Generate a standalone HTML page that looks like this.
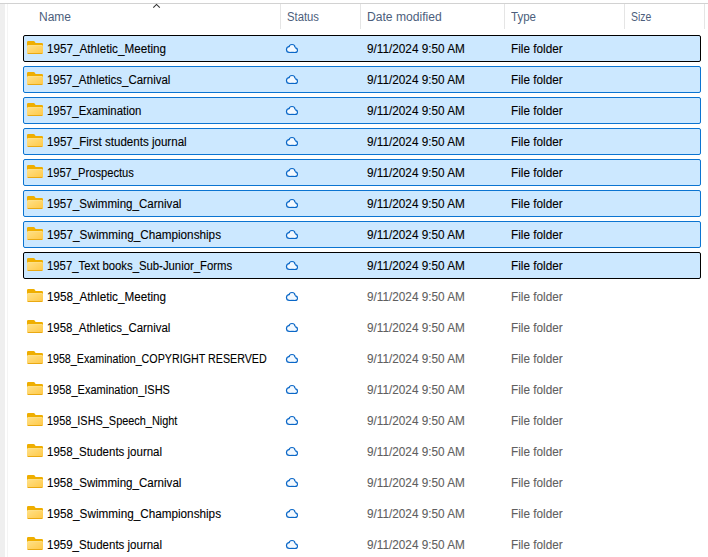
<!DOCTYPE html><html><head><meta charset="utf-8"><style>
*{margin:0;padding:0;box-sizing:border-box}
html,body{width:708px;height:557px;overflow:hidden;background:#fff}
body{position:relative;font-family:"Liberation Sans",sans-serif;font-size:12px;color:#000}
.abs{position:absolute}
.t{position:absolute;white-space:pre;line-height:14px;transform-origin:0 0;-webkit-text-stroke:0.1px currentColor}
.h{color:#4c5e7c;-webkit-text-stroke:0}
.sep{position:absolute;top:4px;width:1px;height:25px;background:#e5e5e5}
.row{position:absolute;left:23px;width:678px;height:27px;border-radius:2px}
.sel{background:#cce8ff;border:1px solid #0b74d1}
.foc{background:#cce8ff;border:1px solid #000}
.fd{position:absolute;left:27px}
.cl{position:absolute;left:285px}
.g{color:#5f5f5f}
</style></head><body>
<div class="abs" style="left:0;top:4px;width:5px;height:553px;background:#efefef"></div>
<div class="abs" style="left:7px;top:4px;width:1px;height:553px;background:#f4f4f4"></div>
<div class="abs" style="left:0;top:3px;width:708px;height:1px;background:#d2d2d2"></div>
<div class="sep" style="left:280px"></div>
<div class="sep" style="left:360px"></div>
<div class="sep" style="left:504px"></div>
<div class="sep" style="left:624px"></div>
<div class="sep" style="left:704px"></div>
<svg class="abs" style="left:151px;top:2px" width="12" height="8" viewBox="0 0 12 8"><path d="M2.3,5.6 L5.5,2.4 L8.8,5.6" fill="none" stroke="#333" stroke-width="1.1"/></svg>
<div class="t h" style="left:39px;top:10px;transform:scaleX(1.0)">Name</div>
<div class="t h" style="left:287px;top:10px;transform:scaleX(0.94)">Status</div>
<div class="t h" style="left:367px;top:10px;transform:scaleX(1.01)">Date modified</div>
<div class="t h" style="left:511px;top:10px;transform:scaleX(0.96)">Type</div>
<div class="t h" style="left:631px;top:10px;transform:scaleX(0.87)">Size</div>
<div class="row foc" style="top:35px"></div>
<svg class="fd" style="top:41px" width="16" height="13" viewBox="0 0 16 13"><defs><linearGradient id="fg" x1="0" y1="0" x2="1" y2="1"><stop offset="0" stop-color="#ffe188"/><stop offset="1" stop-color="#ffc846"/></linearGradient></defs><path d="M0,1.2 Q0,0 1.2,0 H6.6 Q7.3,0 7.7,0.6 L8.6,2 H14.8 Q16,2 16,3.2 V5 H0 Z" fill="#efae00"/><rect x="0" y="4.15" width="16" height="8.85" rx="1.2" fill="url(#fg)"/><rect x="0.6" y="4.15" width="14.8" height="0.7" fill="#ffeeb0" opacity="0.7"/><rect x="0.6" y="12" width="14.8" height="1" rx="0.5" fill="#eaa912"/></svg>
<svg class="cl" style="top:43px" width="14" height="11" viewBox="0 0 14 11"><circle cx="4.4" cy="6.5" r="3.50" fill="#0a67c7"/><circle cx="7.0" cy="4.5" r="3.60" fill="#0a67c7"/><circle cx="10.15" cy="7.15" r="2.85" fill="#0a67c7"/><rect x="4.4" y="4.5" width="5.75" height="5.50" fill="#0a67c7"/><circle cx="4.4" cy="6.5" r="2.30" fill="#f3f9ff"/><circle cx="7.0" cy="4.5" r="2.40" fill="#f3f9ff"/><circle cx="10.15" cy="7.15" r="1.65" fill="#f3f9ff"/><rect x="4.4" y="4.5" width="5.75" height="4.30" fill="#f3f9ff"/></svg>
<div class="t" style="left:47px;top:42px;transform:scaleX(0.975)">1957_Athletic_Meeting</div>
<div class="t" style="left:367px;top:42px;transform:scaleX(0.98)">9/11/2024 9:50 AM</div>
<div class="t" style="left:511px;top:42px;transform:scaleX(0.98)">File folder</div>
<div class="row sel" style="top:66px"></div>
<svg class="fd" style="top:72px" width="16" height="13" viewBox="0 0 16 13"><defs><linearGradient id="fg" x1="0" y1="0" x2="1" y2="1"><stop offset="0" stop-color="#ffe188"/><stop offset="1" stop-color="#ffc846"/></linearGradient></defs><path d="M0,1.2 Q0,0 1.2,0 H6.6 Q7.3,0 7.7,0.6 L8.6,2 H14.8 Q16,2 16,3.2 V5 H0 Z" fill="#efae00"/><rect x="0" y="4.15" width="16" height="8.85" rx="1.2" fill="url(#fg)"/><rect x="0.6" y="4.15" width="14.8" height="0.7" fill="#ffeeb0" opacity="0.7"/><rect x="0.6" y="12" width="14.8" height="1" rx="0.5" fill="#eaa912"/></svg>
<svg class="cl" style="top:74px" width="14" height="11" viewBox="0 0 14 11"><circle cx="4.4" cy="6.5" r="3.50" fill="#0a67c7"/><circle cx="7.0" cy="4.5" r="3.60" fill="#0a67c7"/><circle cx="10.15" cy="7.15" r="2.85" fill="#0a67c7"/><rect x="4.4" y="4.5" width="5.75" height="5.50" fill="#0a67c7"/><circle cx="4.4" cy="6.5" r="2.30" fill="#f3f9ff"/><circle cx="7.0" cy="4.5" r="2.40" fill="#f3f9ff"/><circle cx="10.15" cy="7.15" r="1.65" fill="#f3f9ff"/><rect x="4.4" y="4.5" width="5.75" height="4.30" fill="#f3f9ff"/></svg>
<div class="t" style="left:47px;top:73px;transform:scaleX(0.953)">1957_Athletics_Carnival</div>
<div class="t" style="left:367px;top:73px;transform:scaleX(0.98)">9/11/2024 9:50 AM</div>
<div class="t" style="left:511px;top:73px;transform:scaleX(0.98)">File folder</div>
<div class="row sel" style="top:97px"></div>
<svg class="fd" style="top:103px" width="16" height="13" viewBox="0 0 16 13"><defs><linearGradient id="fg" x1="0" y1="0" x2="1" y2="1"><stop offset="0" stop-color="#ffe188"/><stop offset="1" stop-color="#ffc846"/></linearGradient></defs><path d="M0,1.2 Q0,0 1.2,0 H6.6 Q7.3,0 7.7,0.6 L8.6,2 H14.8 Q16,2 16,3.2 V5 H0 Z" fill="#efae00"/><rect x="0" y="4.15" width="16" height="8.85" rx="1.2" fill="url(#fg)"/><rect x="0.6" y="4.15" width="14.8" height="0.7" fill="#ffeeb0" opacity="0.7"/><rect x="0.6" y="12" width="14.8" height="1" rx="0.5" fill="#eaa912"/></svg>
<svg class="cl" style="top:105px" width="14" height="11" viewBox="0 0 14 11"><circle cx="4.4" cy="6.5" r="3.50" fill="#0a67c7"/><circle cx="7.0" cy="4.5" r="3.60" fill="#0a67c7"/><circle cx="10.15" cy="7.15" r="2.85" fill="#0a67c7"/><rect x="4.4" y="4.5" width="5.75" height="5.50" fill="#0a67c7"/><circle cx="4.4" cy="6.5" r="2.30" fill="#f3f9ff"/><circle cx="7.0" cy="4.5" r="2.40" fill="#f3f9ff"/><circle cx="10.15" cy="7.15" r="1.65" fill="#f3f9ff"/><rect x="4.4" y="4.5" width="5.75" height="4.30" fill="#f3f9ff"/></svg>
<div class="t" style="left:47px;top:104px;transform:scaleX(0.949)">1957_Examination</div>
<div class="t" style="left:367px;top:104px;transform:scaleX(0.98)">9/11/2024 9:50 AM</div>
<div class="t" style="left:511px;top:104px;transform:scaleX(0.98)">File folder</div>
<div class="row sel" style="top:128px"></div>
<svg class="fd" style="top:134px" width="16" height="13" viewBox="0 0 16 13"><defs><linearGradient id="fg" x1="0" y1="0" x2="1" y2="1"><stop offset="0" stop-color="#ffe188"/><stop offset="1" stop-color="#ffc846"/></linearGradient></defs><path d="M0,1.2 Q0,0 1.2,0 H6.6 Q7.3,0 7.7,0.6 L8.6,2 H14.8 Q16,2 16,3.2 V5 H0 Z" fill="#efae00"/><rect x="0" y="4.15" width="16" height="8.85" rx="1.2" fill="url(#fg)"/><rect x="0.6" y="4.15" width="14.8" height="0.7" fill="#ffeeb0" opacity="0.7"/><rect x="0.6" y="12" width="14.8" height="1" rx="0.5" fill="#eaa912"/></svg>
<svg class="cl" style="top:136px" width="14" height="11" viewBox="0 0 14 11"><circle cx="4.4" cy="6.5" r="3.50" fill="#0a67c7"/><circle cx="7.0" cy="4.5" r="3.60" fill="#0a67c7"/><circle cx="10.15" cy="7.15" r="2.85" fill="#0a67c7"/><rect x="4.4" y="4.5" width="5.75" height="5.50" fill="#0a67c7"/><circle cx="4.4" cy="6.5" r="2.30" fill="#f3f9ff"/><circle cx="7.0" cy="4.5" r="2.40" fill="#f3f9ff"/><circle cx="10.15" cy="7.15" r="1.65" fill="#f3f9ff"/><rect x="4.4" y="4.5" width="5.75" height="4.30" fill="#f3f9ff"/></svg>
<div class="t" style="left:47px;top:135px;transform:scaleX(0.965)">1957_First students journal</div>
<div class="t" style="left:367px;top:135px;transform:scaleX(0.98)">9/11/2024 9:50 AM</div>
<div class="t" style="left:511px;top:135px;transform:scaleX(0.98)">File folder</div>
<div class="row sel" style="top:159px"></div>
<svg class="fd" style="top:165px" width="16" height="13" viewBox="0 0 16 13"><defs><linearGradient id="fg" x1="0" y1="0" x2="1" y2="1"><stop offset="0" stop-color="#ffe188"/><stop offset="1" stop-color="#ffc846"/></linearGradient></defs><path d="M0,1.2 Q0,0 1.2,0 H6.6 Q7.3,0 7.7,0.6 L8.6,2 H14.8 Q16,2 16,3.2 V5 H0 Z" fill="#efae00"/><rect x="0" y="4.15" width="16" height="8.85" rx="1.2" fill="url(#fg)"/><rect x="0.6" y="4.15" width="14.8" height="0.7" fill="#ffeeb0" opacity="0.7"/><rect x="0.6" y="12" width="14.8" height="1" rx="0.5" fill="#eaa912"/></svg>
<svg class="cl" style="top:167px" width="14" height="11" viewBox="0 0 14 11"><circle cx="4.4" cy="6.5" r="3.50" fill="#0a67c7"/><circle cx="7.0" cy="4.5" r="3.60" fill="#0a67c7"/><circle cx="10.15" cy="7.15" r="2.85" fill="#0a67c7"/><rect x="4.4" y="4.5" width="5.75" height="5.50" fill="#0a67c7"/><circle cx="4.4" cy="6.5" r="2.30" fill="#f3f9ff"/><circle cx="7.0" cy="4.5" r="2.40" fill="#f3f9ff"/><circle cx="10.15" cy="7.15" r="1.65" fill="#f3f9ff"/><rect x="4.4" y="4.5" width="5.75" height="4.30" fill="#f3f9ff"/></svg>
<div class="t" style="left:47px;top:166px;transform:scaleX(0.93)">1957_Prospectus</div>
<div class="t" style="left:367px;top:166px;transform:scaleX(0.98)">9/11/2024 9:50 AM</div>
<div class="t" style="left:511px;top:166px;transform:scaleX(0.98)">File folder</div>
<div class="row sel" style="top:190px"></div>
<svg class="fd" style="top:196px" width="16" height="13" viewBox="0 0 16 13"><defs><linearGradient id="fg" x1="0" y1="0" x2="1" y2="1"><stop offset="0" stop-color="#ffe188"/><stop offset="1" stop-color="#ffc846"/></linearGradient></defs><path d="M0,1.2 Q0,0 1.2,0 H6.6 Q7.3,0 7.7,0.6 L8.6,2 H14.8 Q16,2 16,3.2 V5 H0 Z" fill="#efae00"/><rect x="0" y="4.15" width="16" height="8.85" rx="1.2" fill="url(#fg)"/><rect x="0.6" y="4.15" width="14.8" height="0.7" fill="#ffeeb0" opacity="0.7"/><rect x="0.6" y="12" width="14.8" height="1" rx="0.5" fill="#eaa912"/></svg>
<svg class="cl" style="top:198px" width="14" height="11" viewBox="0 0 14 11"><circle cx="4.4" cy="6.5" r="3.50" fill="#0a67c7"/><circle cx="7.0" cy="4.5" r="3.60" fill="#0a67c7"/><circle cx="10.15" cy="7.15" r="2.85" fill="#0a67c7"/><rect x="4.4" y="4.5" width="5.75" height="5.50" fill="#0a67c7"/><circle cx="4.4" cy="6.5" r="2.30" fill="#f3f9ff"/><circle cx="7.0" cy="4.5" r="2.40" fill="#f3f9ff"/><circle cx="10.15" cy="7.15" r="1.65" fill="#f3f9ff"/><rect x="4.4" y="4.5" width="5.75" height="4.30" fill="#f3f9ff"/></svg>
<div class="t" style="left:47px;top:197px;transform:scaleX(0.964)">1957_Swimming_Carnival</div>
<div class="t" style="left:367px;top:197px;transform:scaleX(0.98)">9/11/2024 9:50 AM</div>
<div class="t" style="left:511px;top:197px;transform:scaleX(0.98)">File folder</div>
<div class="row sel" style="top:221px"></div>
<svg class="fd" style="top:227px" width="16" height="13" viewBox="0 0 16 13"><defs><linearGradient id="fg" x1="0" y1="0" x2="1" y2="1"><stop offset="0" stop-color="#ffe188"/><stop offset="1" stop-color="#ffc846"/></linearGradient></defs><path d="M0,1.2 Q0,0 1.2,0 H6.6 Q7.3,0 7.7,0.6 L8.6,2 H14.8 Q16,2 16,3.2 V5 H0 Z" fill="#efae00"/><rect x="0" y="4.15" width="16" height="8.85" rx="1.2" fill="url(#fg)"/><rect x="0.6" y="4.15" width="14.8" height="0.7" fill="#ffeeb0" opacity="0.7"/><rect x="0.6" y="12" width="14.8" height="1" rx="0.5" fill="#eaa912"/></svg>
<svg class="cl" style="top:229px" width="14" height="11" viewBox="0 0 14 11"><circle cx="4.4" cy="6.5" r="3.50" fill="#0a67c7"/><circle cx="7.0" cy="4.5" r="3.60" fill="#0a67c7"/><circle cx="10.15" cy="7.15" r="2.85" fill="#0a67c7"/><rect x="4.4" y="4.5" width="5.75" height="5.50" fill="#0a67c7"/><circle cx="4.4" cy="6.5" r="2.30" fill="#f3f9ff"/><circle cx="7.0" cy="4.5" r="2.40" fill="#f3f9ff"/><circle cx="10.15" cy="7.15" r="1.65" fill="#f3f9ff"/><rect x="4.4" y="4.5" width="5.75" height="4.30" fill="#f3f9ff"/></svg>
<div class="t" style="left:47px;top:228px;transform:scaleX(0.977)">1957_Swimming_Championships</div>
<div class="t" style="left:367px;top:228px;transform:scaleX(0.98)">9/11/2024 9:50 AM</div>
<div class="t" style="left:511px;top:228px;transform:scaleX(0.98)">File folder</div>
<div class="row foc" style="top:252px"></div>
<svg class="fd" style="top:258px" width="16" height="13" viewBox="0 0 16 13"><defs><linearGradient id="fg" x1="0" y1="0" x2="1" y2="1"><stop offset="0" stop-color="#ffe188"/><stop offset="1" stop-color="#ffc846"/></linearGradient></defs><path d="M0,1.2 Q0,0 1.2,0 H6.6 Q7.3,0 7.7,0.6 L8.6,2 H14.8 Q16,2 16,3.2 V5 H0 Z" fill="#efae00"/><rect x="0" y="4.15" width="16" height="8.85" rx="1.2" fill="url(#fg)"/><rect x="0.6" y="4.15" width="14.8" height="0.7" fill="#ffeeb0" opacity="0.7"/><rect x="0.6" y="12" width="14.8" height="1" rx="0.5" fill="#eaa912"/></svg>
<svg class="cl" style="top:260px" width="14" height="11" viewBox="0 0 14 11"><circle cx="4.4" cy="6.5" r="3.50" fill="#0a67c7"/><circle cx="7.0" cy="4.5" r="3.60" fill="#0a67c7"/><circle cx="10.15" cy="7.15" r="2.85" fill="#0a67c7"/><rect x="4.4" y="4.5" width="5.75" height="5.50" fill="#0a67c7"/><circle cx="4.4" cy="6.5" r="2.30" fill="#f3f9ff"/><circle cx="7.0" cy="4.5" r="2.40" fill="#f3f9ff"/><circle cx="10.15" cy="7.15" r="1.65" fill="#f3f9ff"/><rect x="4.4" y="4.5" width="5.75" height="4.30" fill="#f3f9ff"/></svg>
<div class="t" style="left:47px;top:259px;transform:scaleX(0.944)">1957_Text books_Sub-Junior_Forms</div>
<div class="t" style="left:367px;top:259px;transform:scaleX(0.98)">9/11/2024 9:50 AM</div>
<div class="t" style="left:511px;top:259px;transform:scaleX(0.98)">File folder</div>
<svg class="fd" style="top:289px" width="16" height="13" viewBox="0 0 16 13"><defs><linearGradient id="fg" x1="0" y1="0" x2="1" y2="1"><stop offset="0" stop-color="#ffe188"/><stop offset="1" stop-color="#ffc846"/></linearGradient></defs><path d="M0,1.2 Q0,0 1.2,0 H6.6 Q7.3,0 7.7,0.6 L8.6,2 H14.8 Q16,2 16,3.2 V5 H0 Z" fill="#efae00"/><rect x="0" y="4.15" width="16" height="8.85" rx="1.2" fill="url(#fg)"/><rect x="0.6" y="4.15" width="14.8" height="0.7" fill="#ffeeb0" opacity="0.7"/><rect x="0.6" y="12" width="14.8" height="1" rx="0.5" fill="#eaa912"/></svg>
<svg class="cl" style="top:291px" width="14" height="11" viewBox="0 0 14 11"><circle cx="4.4" cy="6.5" r="3.50" fill="#0a67c7"/><circle cx="7.0" cy="4.5" r="3.60" fill="#0a67c7"/><circle cx="10.15" cy="7.15" r="2.85" fill="#0a67c7"/><rect x="4.4" y="4.5" width="5.75" height="5.50" fill="#0a67c7"/><circle cx="4.4" cy="6.5" r="2.30" fill="#f3f9ff"/><circle cx="7.0" cy="4.5" r="2.40" fill="#f3f9ff"/><circle cx="10.15" cy="7.15" r="1.65" fill="#f3f9ff"/><rect x="4.4" y="4.5" width="5.75" height="4.30" fill="#f3f9ff"/></svg>
<div class="t" style="left:47px;top:290px;transform:scaleX(0.975)">1958_Athletic_Meeting</div>
<div class="t g" style="left:367px;top:290px;transform:scaleX(0.98)">9/11/2024 9:50 AM</div>
<div class="t g" style="left:511px;top:290px;transform:scaleX(0.98)">File folder</div>
<svg class="fd" style="top:320px" width="16" height="13" viewBox="0 0 16 13"><defs><linearGradient id="fg" x1="0" y1="0" x2="1" y2="1"><stop offset="0" stop-color="#ffe188"/><stop offset="1" stop-color="#ffc846"/></linearGradient></defs><path d="M0,1.2 Q0,0 1.2,0 H6.6 Q7.3,0 7.7,0.6 L8.6,2 H14.8 Q16,2 16,3.2 V5 H0 Z" fill="#efae00"/><rect x="0" y="4.15" width="16" height="8.85" rx="1.2" fill="url(#fg)"/><rect x="0.6" y="4.15" width="14.8" height="0.7" fill="#ffeeb0" opacity="0.7"/><rect x="0.6" y="12" width="14.8" height="1" rx="0.5" fill="#eaa912"/></svg>
<svg class="cl" style="top:322px" width="14" height="11" viewBox="0 0 14 11"><circle cx="4.4" cy="6.5" r="3.50" fill="#0a67c7"/><circle cx="7.0" cy="4.5" r="3.60" fill="#0a67c7"/><circle cx="10.15" cy="7.15" r="2.85" fill="#0a67c7"/><rect x="4.4" y="4.5" width="5.75" height="5.50" fill="#0a67c7"/><circle cx="4.4" cy="6.5" r="2.30" fill="#f3f9ff"/><circle cx="7.0" cy="4.5" r="2.40" fill="#f3f9ff"/><circle cx="10.15" cy="7.15" r="1.65" fill="#f3f9ff"/><rect x="4.4" y="4.5" width="5.75" height="4.30" fill="#f3f9ff"/></svg>
<div class="t" style="left:47px;top:321px;transform:scaleX(0.953)">1958_Athletics_Carnival</div>
<div class="t g" style="left:367px;top:321px;transform:scaleX(0.98)">9/11/2024 9:50 AM</div>
<div class="t g" style="left:511px;top:321px;transform:scaleX(0.98)">File folder</div>
<svg class="fd" style="top:351px" width="16" height="13" viewBox="0 0 16 13"><defs><linearGradient id="fg" x1="0" y1="0" x2="1" y2="1"><stop offset="0" stop-color="#ffe188"/><stop offset="1" stop-color="#ffc846"/></linearGradient></defs><path d="M0,1.2 Q0,0 1.2,0 H6.6 Q7.3,0 7.7,0.6 L8.6,2 H14.8 Q16,2 16,3.2 V5 H0 Z" fill="#efae00"/><rect x="0" y="4.15" width="16" height="8.85" rx="1.2" fill="url(#fg)"/><rect x="0.6" y="4.15" width="14.8" height="0.7" fill="#ffeeb0" opacity="0.7"/><rect x="0.6" y="12" width="14.8" height="1" rx="0.5" fill="#eaa912"/></svg>
<svg class="cl" style="top:353px" width="14" height="11" viewBox="0 0 14 11"><circle cx="4.4" cy="6.5" r="3.50" fill="#0a67c7"/><circle cx="7.0" cy="4.5" r="3.60" fill="#0a67c7"/><circle cx="10.15" cy="7.15" r="2.85" fill="#0a67c7"/><rect x="4.4" y="4.5" width="5.75" height="5.50" fill="#0a67c7"/><circle cx="4.4" cy="6.5" r="2.30" fill="#f3f9ff"/><circle cx="7.0" cy="4.5" r="2.40" fill="#f3f9ff"/><circle cx="10.15" cy="7.15" r="1.65" fill="#f3f9ff"/><rect x="4.4" y="4.5" width="5.75" height="4.30" fill="#f3f9ff"/></svg>
<div class="t" style="left:47px;top:352px;transform:scaleX(0.892)">1958_Examination_COPYRIGHT RESERVED</div>
<div class="t g" style="left:367px;top:352px;transform:scaleX(0.98)">9/11/2024 9:50 AM</div>
<div class="t g" style="left:511px;top:352px;transform:scaleX(0.98)">File folder</div>
<svg class="fd" style="top:382px" width="16" height="13" viewBox="0 0 16 13"><defs><linearGradient id="fg" x1="0" y1="0" x2="1" y2="1"><stop offset="0" stop-color="#ffe188"/><stop offset="1" stop-color="#ffc846"/></linearGradient></defs><path d="M0,1.2 Q0,0 1.2,0 H6.6 Q7.3,0 7.7,0.6 L8.6,2 H14.8 Q16,2 16,3.2 V5 H0 Z" fill="#efae00"/><rect x="0" y="4.15" width="16" height="8.85" rx="1.2" fill="url(#fg)"/><rect x="0.6" y="4.15" width="14.8" height="0.7" fill="#ffeeb0" opacity="0.7"/><rect x="0.6" y="12" width="14.8" height="1" rx="0.5" fill="#eaa912"/></svg>
<svg class="cl" style="top:384px" width="14" height="11" viewBox="0 0 14 11"><circle cx="4.4" cy="6.5" r="3.50" fill="#0a67c7"/><circle cx="7.0" cy="4.5" r="3.60" fill="#0a67c7"/><circle cx="10.15" cy="7.15" r="2.85" fill="#0a67c7"/><rect x="4.4" y="4.5" width="5.75" height="5.50" fill="#0a67c7"/><circle cx="4.4" cy="6.5" r="2.30" fill="#f3f9ff"/><circle cx="7.0" cy="4.5" r="2.40" fill="#f3f9ff"/><circle cx="10.15" cy="7.15" r="1.65" fill="#f3f9ff"/><rect x="4.4" y="4.5" width="5.75" height="4.30" fill="#f3f9ff"/></svg>
<div class="t" style="left:47px;top:383px;transform:scaleX(0.917)">1958_Examination_ISHS</div>
<div class="t g" style="left:367px;top:383px;transform:scaleX(0.98)">9/11/2024 9:50 AM</div>
<div class="t g" style="left:511px;top:383px;transform:scaleX(0.98)">File folder</div>
<svg class="fd" style="top:413px" width="16" height="13" viewBox="0 0 16 13"><defs><linearGradient id="fg" x1="0" y1="0" x2="1" y2="1"><stop offset="0" stop-color="#ffe188"/><stop offset="1" stop-color="#ffc846"/></linearGradient></defs><path d="M0,1.2 Q0,0 1.2,0 H6.6 Q7.3,0 7.7,0.6 L8.6,2 H14.8 Q16,2 16,3.2 V5 H0 Z" fill="#efae00"/><rect x="0" y="4.15" width="16" height="8.85" rx="1.2" fill="url(#fg)"/><rect x="0.6" y="4.15" width="14.8" height="0.7" fill="#ffeeb0" opacity="0.7"/><rect x="0.6" y="12" width="14.8" height="1" rx="0.5" fill="#eaa912"/></svg>
<svg class="cl" style="top:415px" width="14" height="11" viewBox="0 0 14 11"><circle cx="4.4" cy="6.5" r="3.50" fill="#0a67c7"/><circle cx="7.0" cy="4.5" r="3.60" fill="#0a67c7"/><circle cx="10.15" cy="7.15" r="2.85" fill="#0a67c7"/><rect x="4.4" y="4.5" width="5.75" height="5.50" fill="#0a67c7"/><circle cx="4.4" cy="6.5" r="2.30" fill="#f3f9ff"/><circle cx="7.0" cy="4.5" r="2.40" fill="#f3f9ff"/><circle cx="10.15" cy="7.15" r="1.65" fill="#f3f9ff"/><rect x="4.4" y="4.5" width="5.75" height="4.30" fill="#f3f9ff"/></svg>
<div class="t" style="left:47px;top:414px;transform:scaleX(0.909)">1958_ISHS_Speech_Night</div>
<div class="t g" style="left:367px;top:414px;transform:scaleX(0.98)">9/11/2024 9:50 AM</div>
<div class="t g" style="left:511px;top:414px;transform:scaleX(0.98)">File folder</div>
<svg class="fd" style="top:444px" width="16" height="13" viewBox="0 0 16 13"><defs><linearGradient id="fg" x1="0" y1="0" x2="1" y2="1"><stop offset="0" stop-color="#ffe188"/><stop offset="1" stop-color="#ffc846"/></linearGradient></defs><path d="M0,1.2 Q0,0 1.2,0 H6.6 Q7.3,0 7.7,0.6 L8.6,2 H14.8 Q16,2 16,3.2 V5 H0 Z" fill="#efae00"/><rect x="0" y="4.15" width="16" height="8.85" rx="1.2" fill="url(#fg)"/><rect x="0.6" y="4.15" width="14.8" height="0.7" fill="#ffeeb0" opacity="0.7"/><rect x="0.6" y="12" width="14.8" height="1" rx="0.5" fill="#eaa912"/></svg>
<svg class="cl" style="top:446px" width="14" height="11" viewBox="0 0 14 11"><circle cx="4.4" cy="6.5" r="3.50" fill="#0a67c7"/><circle cx="7.0" cy="4.5" r="3.60" fill="#0a67c7"/><circle cx="10.15" cy="7.15" r="2.85" fill="#0a67c7"/><rect x="4.4" y="4.5" width="5.75" height="5.50" fill="#0a67c7"/><circle cx="4.4" cy="6.5" r="2.30" fill="#f3f9ff"/><circle cx="7.0" cy="4.5" r="2.40" fill="#f3f9ff"/><circle cx="10.15" cy="7.15" r="1.65" fill="#f3f9ff"/><rect x="4.4" y="4.5" width="5.75" height="4.30" fill="#f3f9ff"/></svg>
<div class="t" style="left:47px;top:445px;transform:scaleX(0.958)">1958_Students journal</div>
<div class="t g" style="left:367px;top:445px;transform:scaleX(0.98)">9/11/2024 9:50 AM</div>
<div class="t g" style="left:511px;top:445px;transform:scaleX(0.98)">File folder</div>
<svg class="fd" style="top:475px" width="16" height="13" viewBox="0 0 16 13"><defs><linearGradient id="fg" x1="0" y1="0" x2="1" y2="1"><stop offset="0" stop-color="#ffe188"/><stop offset="1" stop-color="#ffc846"/></linearGradient></defs><path d="M0,1.2 Q0,0 1.2,0 H6.6 Q7.3,0 7.7,0.6 L8.6,2 H14.8 Q16,2 16,3.2 V5 H0 Z" fill="#efae00"/><rect x="0" y="4.15" width="16" height="8.85" rx="1.2" fill="url(#fg)"/><rect x="0.6" y="4.15" width="14.8" height="0.7" fill="#ffeeb0" opacity="0.7"/><rect x="0.6" y="12" width="14.8" height="1" rx="0.5" fill="#eaa912"/></svg>
<svg class="cl" style="top:477px" width="14" height="11" viewBox="0 0 14 11"><circle cx="4.4" cy="6.5" r="3.50" fill="#0a67c7"/><circle cx="7.0" cy="4.5" r="3.60" fill="#0a67c7"/><circle cx="10.15" cy="7.15" r="2.85" fill="#0a67c7"/><rect x="4.4" y="4.5" width="5.75" height="5.50" fill="#0a67c7"/><circle cx="4.4" cy="6.5" r="2.30" fill="#f3f9ff"/><circle cx="7.0" cy="4.5" r="2.40" fill="#f3f9ff"/><circle cx="10.15" cy="7.15" r="1.65" fill="#f3f9ff"/><rect x="4.4" y="4.5" width="5.75" height="4.30" fill="#f3f9ff"/></svg>
<div class="t" style="left:47px;top:476px;transform:scaleX(0.964)">1958_Swimming_Carnival</div>
<div class="t g" style="left:367px;top:476px;transform:scaleX(0.98)">9/11/2024 9:50 AM</div>
<div class="t g" style="left:511px;top:476px;transform:scaleX(0.98)">File folder</div>
<svg class="fd" style="top:506px" width="16" height="13" viewBox="0 0 16 13"><defs><linearGradient id="fg" x1="0" y1="0" x2="1" y2="1"><stop offset="0" stop-color="#ffe188"/><stop offset="1" stop-color="#ffc846"/></linearGradient></defs><path d="M0,1.2 Q0,0 1.2,0 H6.6 Q7.3,0 7.7,0.6 L8.6,2 H14.8 Q16,2 16,3.2 V5 H0 Z" fill="#efae00"/><rect x="0" y="4.15" width="16" height="8.85" rx="1.2" fill="url(#fg)"/><rect x="0.6" y="4.15" width="14.8" height="0.7" fill="#ffeeb0" opacity="0.7"/><rect x="0.6" y="12" width="14.8" height="1" rx="0.5" fill="#eaa912"/></svg>
<svg class="cl" style="top:508px" width="14" height="11" viewBox="0 0 14 11"><circle cx="4.4" cy="6.5" r="3.50" fill="#0a67c7"/><circle cx="7.0" cy="4.5" r="3.60" fill="#0a67c7"/><circle cx="10.15" cy="7.15" r="2.85" fill="#0a67c7"/><rect x="4.4" y="4.5" width="5.75" height="5.50" fill="#0a67c7"/><circle cx="4.4" cy="6.5" r="2.30" fill="#f3f9ff"/><circle cx="7.0" cy="4.5" r="2.40" fill="#f3f9ff"/><circle cx="10.15" cy="7.15" r="1.65" fill="#f3f9ff"/><rect x="4.4" y="4.5" width="5.75" height="4.30" fill="#f3f9ff"/></svg>
<div class="t" style="left:47px;top:507px;transform:scaleX(0.977)">1958_Swimming_Championships</div>
<div class="t g" style="left:367px;top:507px;transform:scaleX(0.98)">9/11/2024 9:50 AM</div>
<div class="t g" style="left:511px;top:507px;transform:scaleX(0.98)">File folder</div>
<svg class="fd" style="top:537px" width="16" height="13" viewBox="0 0 16 13"><defs><linearGradient id="fg" x1="0" y1="0" x2="1" y2="1"><stop offset="0" stop-color="#ffe188"/><stop offset="1" stop-color="#ffc846"/></linearGradient></defs><path d="M0,1.2 Q0,0 1.2,0 H6.6 Q7.3,0 7.7,0.6 L8.6,2 H14.8 Q16,2 16,3.2 V5 H0 Z" fill="#efae00"/><rect x="0" y="4.15" width="16" height="8.85" rx="1.2" fill="url(#fg)"/><rect x="0.6" y="4.15" width="14.8" height="0.7" fill="#ffeeb0" opacity="0.7"/><rect x="0.6" y="12" width="14.8" height="1" rx="0.5" fill="#eaa912"/></svg>
<svg class="cl" style="top:539px" width="14" height="11" viewBox="0 0 14 11"><circle cx="4.4" cy="6.5" r="3.50" fill="#0a67c7"/><circle cx="7.0" cy="4.5" r="3.60" fill="#0a67c7"/><circle cx="10.15" cy="7.15" r="2.85" fill="#0a67c7"/><rect x="4.4" y="4.5" width="5.75" height="5.50" fill="#0a67c7"/><circle cx="4.4" cy="6.5" r="2.30" fill="#f3f9ff"/><circle cx="7.0" cy="4.5" r="2.40" fill="#f3f9ff"/><circle cx="10.15" cy="7.15" r="1.65" fill="#f3f9ff"/><rect x="4.4" y="4.5" width="5.75" height="4.30" fill="#f3f9ff"/></svg>
<div class="t" style="left:47px;top:538px;transform:scaleX(0.958)">1959_Students journal</div>
<div class="t g" style="left:367px;top:538px;transform:scaleX(0.98)">9/11/2024 9:50 AM</div>
<div class="t g" style="left:511px;top:538px;transform:scaleX(0.98)">File folder</div>
</body></html>
